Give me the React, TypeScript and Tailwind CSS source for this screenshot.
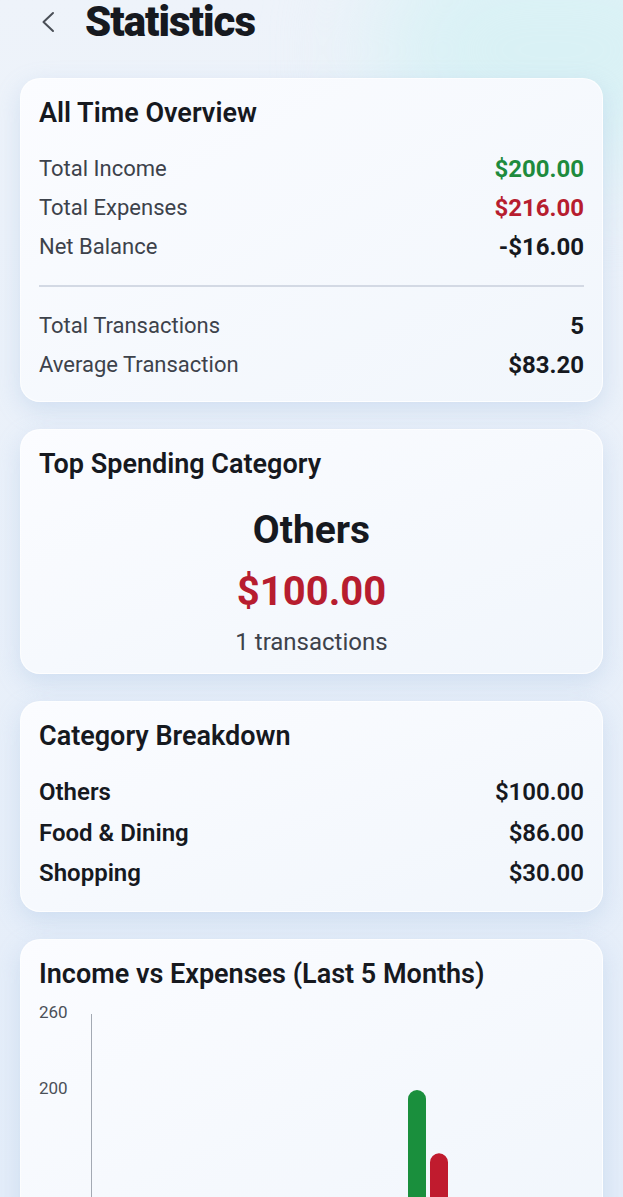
import React from "react";

const overview = [
  { label: "Total Income", value: "$200.00", tone: "text-[#1e8b3d]" },
  { label: "Total Expenses", value: "$216.00", tone: "text-[#b71d2f]" },
  { label: "Net Balance", value: "-$16.00", tone: "text-[#16191f]" },
];

const totals = [
  { label: "Total Transactions", value: "5" },
  { label: "Average Transaction", value: "$83.20" },
];

const categories = [
  { name: "Others", amount: "$100.00" },
  { name: "Food & Dining", amount: "$86.00" },
  { name: "Shopping", amount: "$30.00" },
];

function Card({ className = "", children }: { className?: string; children: React.ReactNode }) {
  return (
    <div
      className={`rounded-[20px] border border-white/80 bg-gradient-to-br from-[#fbfcff] to-[#f1f6fc] px-[18px] pt-[18px] shadow-[0_8px_24px_rgba(140,175,220,0.28)] ${className}`}
    >
      {children}
    </div>
  );
}

function CardTitle({ children }: { children: React.ReactNode }) {
  return <h2 className="text-[27px] leading-[32px] font-semibold text-[#16191f]">{children}</h2>;
}

function StatRow({ label, value, tone = "text-[#16191f]" }: { label: string; value: string; tone?: string }) {
  return (
    <div className="flex h-[39px] items-center justify-between">
      <span className="text-[22px] text-[#3d424b]">{label}</span>
      <span className={`text-[24px] font-bold ${tone}`}>{value}</span>
    </div>
  );
}

function IncomeChart() {
  // 60 units = 76px, top tick 260 at y=14
  const y = (v: number) => 14 + (260 - v) * (76 / 60);
  return (
    <svg width="546" height="230" className="mt-[10px] block" style={{ fontFamily: "Roboto, sans-serif" }}>
      <text x="0" y="14" dominantBaseline="middle" fontSize="17" fill="#4b5058">260</text>
      <text x="0" y="90" dominantBaseline="middle" fontSize="17" fill="#4b5058">200</text>
      <line x1="52.5" y1="14" x2="52.5" y2="230" stroke="#a3a9b3" strokeWidth="1" />
      <path d={`M369 ${y(200) + 9} a9 9 0 0 1 18 0 V230 H369 Z`} fill="#1a8f3d" />
      <path d={`M391 ${y(150) + 9} a9 9 0 0 1 18 0 V230 H391 Z`} fill="#c01b2e" />
    </svg>
  );
}

export default function App() {
  return (
    <div
      className="relative h-[1197px] w-full overflow-hidden bg-gradient-to-b from-[#eef3fa] to-[#e4edf9] text-[#16191f]"
      style={{ fontFamily: "Roboto, 'Noto Sans', sans-serif" }}
    >
      {/* cyan glow top right */}
      <div className="pointer-events-none absolute -top-[70px] right-[-110px] h-[240px] w-[360px] rounded-full bg-[#d9f1f5] blur-[50px]" />

      <div className="relative flex flex-col px-[20px]">
        <header className="flex h-[44px] items-center">
          <button className="ml-[20px] flex h-[24px] w-[16px] items-center justify-center text-[#4a4f57]">
            <svg width="14" height="22" viewBox="0 0 14 22" fill="none">
              <polyline points="12,2 2.5,11 12,20" stroke="currentColor" strokeWidth="2" strokeLinecap="round" strokeLinejoin="round" />
            </svg>
          </button>
          <h1 className="ml-[29px] text-[42px] leading-[44px] font-black tracking-[-1px] text-[#16191f]">Statistics</h1>
        </header>

        <div className="mt-[34px] flex flex-col gap-[27px]">
          <Card className="pb-[17px]">
            <CardTitle>All Time Overview</CardTitle>
            <div className="mt-[20px]">
              {overview.map((r) => (
                <StatRow key={r.label} label={r.label} value={r.value} tone={r.tone} />
              ))}
            </div>
            <div className="my-[19px] h-[2px] bg-[#d3d9e4]" />
            {totals.map((r) => (
              <StatRow key={r.label} label={r.label} value={r.value} />
            ))}
          </Card>

          <Card className="pb-[16px]">
            <CardTitle>Top Spending Category</CardTitle>
            <div className="flex flex-col items-center">
              <div className="mt-[28px] text-[39px] leading-[44px] font-bold">Others</div>
              <div className="mt-[16px] text-[40px] leading-[48px] font-bold text-[#b71d2f]">$100.00</div>
              <div className="mt-[11px] text-[24px] leading-[30px] text-[#3d424b]">1 transactions</div>
            </div>
          </Card>

          <Card className="pb-[17px]">
            <CardTitle>Category Breakdown</CardTitle>
            <div className="mt-[20px]">
              {categories.map((c) => (
                <div key={c.name} className="flex h-[40.5px] items-center justify-between text-[24px] font-semibold">
                  <span>{c.name}</span>
                  <span>{c.amount}</span>
                </div>
              ))}
            </div>
          </Card>

          <Card>
            <CardTitle>Income vs Expenses (Last 5 Months)</CardTitle>
            <IncomeChart />
          </Card>
        </div>
      </div>
    </div>
  );
}
